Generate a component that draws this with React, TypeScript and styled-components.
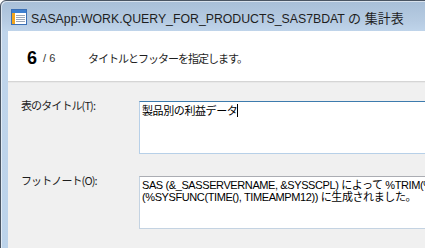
import styled, { createGlobalStyle } from "styled-components";

const GlobalStyle = createGlobalStyle`
  html, body {
    margin: 0;
    padding: 0;
    width: 425px;
    height: 248px;
    overflow: hidden;
    background: #ffffff;
  }
  body {
    font-family: "Liberation Sans", "Noto Sans CJK JP", sans-serif;
  }
`;

const Window = styled.div`
  width: 440px;
  height: 260px;
  box-sizing: border-box;
  border: 1px solid #4a5563;
  border-radius: 6px 6px 0 0;
  background: linear-gradient(180deg, #a8bfd8 0px, #b6cbe2 20px, #c0d5eb 31px, #bcd3ea 100%);
  box-shadow: inset 1px 1px 0 rgba(255, 255, 255, 0.55);
  display: flex;
  flex-direction: column;
  overflow: hidden;
`;

const TitleBar = styled.div`
  height: 30px;
  display: flex;
  align-items: center;
  gap: 4px;
  padding: 2px 0 0 10px;
  box-sizing: border-box;

  svg {
    flex-shrink: 0;
  }
`;

const Caption = styled.div`
  font-family: "Liberation Sans", "Noto Sans CJK JP", sans-serif;
  font-size: 12.3px;
  color: #1e1e1e;
  white-space: nowrap;
`;

const CaptionCjk = styled.span`
  font-size: 13px;
`;

const Client = styled.div`
  flex: 1;
  margin-left: 7px;
  background: #f0f0f0;
  display: flex;
  flex-direction: column;
`;

const Header = styled.div`
  height: 51px;
  flex-shrink: 0;
  background: #ffffff;
  border-bottom: 1px solid #d5d5d5;
  box-shadow: 0 1px 0 #e8e8e8;
  display: flex;
  align-items: center;
  padding: 4px 0 0 19px;
  box-sizing: border-box;
`;

const StepNumber = styled.span`
  font-size: 18px;
  font-weight: bold;
  color: #000000;
`;

const StepTotal = styled.span`
  font-size: 11px;
  color: #333333;
  margin-left: 6px;
  width: 45px;
`;

const StepText = styled.span`
  font-size: 11px;
  letter-spacing: -1px;
  color: #1e1e1e;
  font-family: "Noto Sans CJK JP", sans-serif;
`;

const Body = styled.div`
  display: flex;
  flex-direction: column;
  gap: 22px;
  padding: 19px 0 0 13px;
`;

const Row = styled.div`
  display: flex;
  align-items: flex-start;
`;

const Label = styled.div`
  width: 118px;
  flex-shrink: 0;
  font-size: 11px;
  letter-spacing: -0.9px;
  color: #1e1e1e;
  margin-top: -4px;
  font-family: "Noto Sans CJK JP", sans-serif;
  white-space: nowrap;
`;

const Field = styled.div<{ $focused?: boolean }>`
  width: 320px;
  height: 47px;
  flex-shrink: 0;
  background: #ffffff;
  border: 1px solid ${(p) => (p.$focused ? "#b7d0e8" : "#c4d3e2")};
  border-top-color: ${(p) => (p.$focused ? "#3d7bad" : "#abadb3")};
  padding: 2px 2px;
  font-size: 11px;
  line-height: 12px;
  letter-spacing: -0.4px;
  color: #000000;
  white-space: pre;
  overflow: hidden;
  font-family: "Liberation Sans", "Noto Sans CJK JP", sans-serif;
`;

const Caret = styled.span`
  display: inline-block;
  width: 1px;
  height: 13px;
  background: #000000;
  vertical-align: -2px;
`;

function TableIcon() {
  return (
    <svg width="16" height="16" viewBox="0 0 16 16">
      <rect x="0.5" y="0.5" width="15" height="15" fill="#ffffff" stroke="#3a6fb5" />
      <rect x="1" y="1" width="14" height="3" fill="#3d7fd0" />
      <rect x="1" y="4" width="3" height="11" fill="#f2a51c" />
      <g stroke="#9aa7b8" strokeWidth="1">
        <line x1="5" y1="6.5" x2="14" y2="6.5" />
        <line x1="5" y1="8.5" x2="14" y2="8.5" />
        <line x1="5" y1="10.5" x2="14" y2="10.5" />
        <line x1="5" y1="12.5" x2="14" y2="12.5" />
      </g>
    </svg>
  );
}

export default function App() {
  return (
    <>
      <GlobalStyle />
      <Window>
        <TitleBar>
          <TableIcon />
          <Caption>
            SASApp:WORK.QUERY_FOR_PRODUCTS_SAS7BDAT <CaptionCjk>の 集計表</CaptionCjk>
          </Caption>
        </TitleBar>
        <Client>
          <Header>
            <StepNumber>6</StepNumber>
            <StepTotal>/ 6</StepTotal>
            <StepText>タイトルとフッターを指定します。</StepText>
          </Header>
          <Body>
            <Row>
              <Label>表のタイトル(T):</Label>
              <Field $focused>
                製品別の利益データ
                <Caret />
              </Field>
            </Row>
            <Row>
              <Label>フットノート(O):</Label>
              <Field>
                {"SAS (&_SASSERVERNAME, &SYSSCPL) によって %TRIM(%QSYSFUNC(DATE(), NLDATE20.))\n(%SYSFUNC(TIME(), TIMEAMPM12)) に生成されました。"}
              </Field>
            </Row>
          </Body>
        </Client>
      </Window>
    </>
  );
}
